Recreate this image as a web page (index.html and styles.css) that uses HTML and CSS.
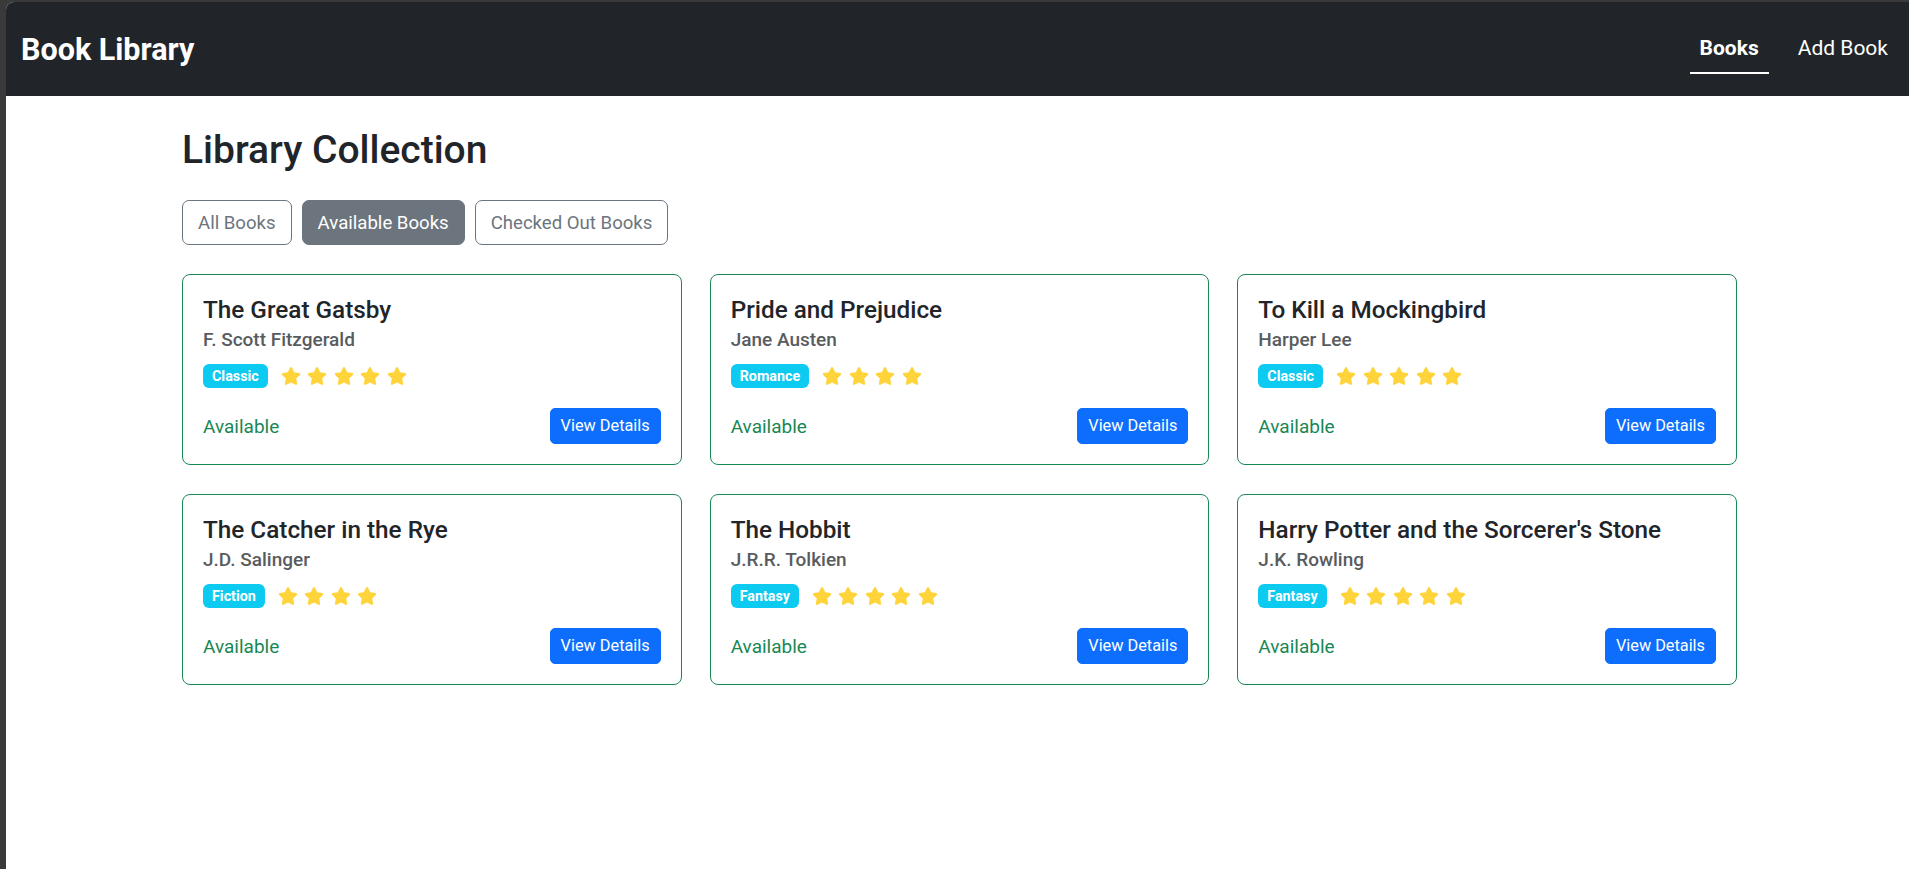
FILE: index.html
```html
<!DOCTYPE html>
<html lang="en">
<head>
<meta charset="utf-8">
<title>Book Library</title>
<link rel="stylesheet" href="styles.css">
</head>
<body>
<svg width="0" height="0" class="defs" aria-hidden="true">
  <defs>
    <symbol id="star" viewBox="0 0 576 512">
      <path d="M316.9 18C311.6 7 300.4 0 288.1 0s-23.4 7-28.8 18L195 150.3 51.4 171.5c-12 1.8-22 10.2-25.7 21.7s-.7 24.2 7.9 32.7L137.8 329 113.2 474.7c-2 12 3 24.2 12.9 31.3s23 8 33.8 2.3l128.3-68.5 128.3 68.5c10.8 5.7 23.9 4.9 33.8-2.3s14.9-19.3 12.9-31.3L438.5 329 542.7 225.9c8.6-8.5 11.7-21.2 7.9-32.7s-13.7-19.9-25.7-21.7L381.2 150.3 316.9 18z"/>
    </symbol>
  </defs>
</svg>
<div class="window">
  <nav class="navbar">
    <a class="brand" href="#">Book Library</a>
    <div class="nav-links">
      <a class="nav-link active" href="#">Books</a>
      <a class="nav-link" href="#">Add Book</a>
    </div>
  </nav>
  <main class="container">
    <h2 class="page-title">Library Collection</h2>
    <div class="filters">
      <button class="filter-btn">All Books</button>
      <button class="filter-btn active">Available Books</button>
      <button class="filter-btn">Checked Out Books</button>
    </div>
    <div class="grid">
      <div class="card">
        <h5 class="card-title">The Great Gatsby</h5>
        <h6 class="card-author">F. Scott Fitzgerald</h6>
        <div class="meta">
          <span class="badge">Classic</span>
          <span class="stars"><svg class="star"><use href="#star"/></svg><svg class="star"><use href="#star"/></svg><svg class="star"><use href="#star"/></svg><svg class="star"><use href="#star"/></svg><svg class="star"><use href="#star"/></svg></span>
        </div>
        <div class="card-footer">
          <span class="status">Available</span>
          <button class="details-btn">View Details</button>
        </div>
      </div>
      <div class="card">
        <h5 class="card-title">Pride and Prejudice</h5>
        <h6 class="card-author">Jane Austen</h6>
        <div class="meta">
          <span class="badge">Romance</span>
          <span class="stars"><svg class="star"><use href="#star"/></svg><svg class="star"><use href="#star"/></svg><svg class="star"><use href="#star"/></svg><svg class="star"><use href="#star"/></svg></span>
        </div>
        <div class="card-footer">
          <span class="status">Available</span>
          <button class="details-btn">View Details</button>
        </div>
      </div>
      <div class="card">
        <h5 class="card-title">To Kill a Mockingbird</h5>
        <h6 class="card-author">Harper Lee</h6>
        <div class="meta">
          <span class="badge">Classic</span>
          <span class="stars"><svg class="star"><use href="#star"/></svg><svg class="star"><use href="#star"/></svg><svg class="star"><use href="#star"/></svg><svg class="star"><use href="#star"/></svg><svg class="star"><use href="#star"/></svg></span>
        </div>
        <div class="card-footer">
          <span class="status">Available</span>
          <button class="details-btn">View Details</button>
        </div>
      </div>
      <div class="card">
        <h5 class="card-title">The Catcher in the Rye</h5>
        <h6 class="card-author">J.D. Salinger</h6>
        <div class="meta">
          <span class="badge">Fiction</span>
          <span class="stars"><svg class="star"><use href="#star"/></svg><svg class="star"><use href="#star"/></svg><svg class="star"><use href="#star"/></svg><svg class="star"><use href="#star"/></svg></span>
        </div>
        <div class="card-footer">
          <span class="status">Available</span>
          <button class="details-btn">View Details</button>
        </div>
      </div>
      <div class="card">
        <h5 class="card-title">The Hobbit</h5>
        <h6 class="card-author">J.R.R. Tolkien</h6>
        <div class="meta">
          <span class="badge">Fantasy</span>
          <span class="stars"><svg class="star"><use href="#star"/></svg><svg class="star"><use href="#star"/></svg><svg class="star"><use href="#star"/></svg><svg class="star"><use href="#star"/></svg><svg class="star"><use href="#star"/></svg></span>
        </div>
        <div class="card-footer">
          <span class="status">Available</span>
          <button class="details-btn">View Details</button>
        </div>
      </div>
      <div class="card">
        <h5 class="card-title">Harry Potter and the Sorcerer's Stone</h5>
        <h6 class="card-author">J.K. Rowling</h6>
        <div class="meta">
          <span class="badge">Fantasy</span>
          <span class="stars"><svg class="star"><use href="#star"/></svg><svg class="star"><use href="#star"/></svg><svg class="star"><use href="#star"/></svg><svg class="star"><use href="#star"/></svg><svg class="star"><use href="#star"/></svg></span>
        </div>
        <div class="card-footer">
          <span class="status">Available</span>
          <button class="details-btn">View Details</button>
        </div>
      </div>
    </div>
  </main>
</div>
</body>
</html>
```

FILE: styles.css
```css
* { box-sizing: border-box; }

html, body {
  margin: 0;
  padding: 0;
  height: 100%;
  overflow: hidden;
}

body {
  background: #3a3a3a;
  font-family: "Segoe UI", Roboto, "Noto Sans", sans-serif;
  color: #212529;
  padding-top: 2px;
  padding-left: 6px;
}

.defs { position: absolute; width: 0; height: 0; }

.window {
  width: 1907px;
  height: 100%;
  background: #ffffff;
  border-top-left-radius: 8px;
  overflow: hidden;
}

.navbar {
  height: 94px;
  background: #212529;
  display: flex;
  align-items: center;
  justify-content: space-between;
  padding: 0 15px;
}

.brand {
  color: #ffffff;
  text-decoration: none;
  font-size: 30.5px;
  font-weight: 700;
  line-height: 45px;
}

.nav-links {
  display: flex;
  align-items: center;
  gap: 19px;
}

.nav-link {
  display: block;
  color: #ffffff;
  text-decoration: none;
  font-size: 21px;
  line-height: 30px;
  padding: 8px 10px 9px;
  border-bottom: 2px solid transparent;
}

.nav-link.active {
  font-weight: 700;
  border-bottom-color: #ffffff;
}

.container {
  width: 1555px;
  margin: 0 auto;
  padding-top: 30px;
}

.page-title {
  margin: 0 0 26px;
  font-size: 39px;
  font-weight: 500;
  line-height: 48px;
  color: #212529;
}

.filters {
  display: flex;
  gap: 10px;
  margin-bottom: 29px;
}

.filter-btn {
  font-family: inherit;
  font-size: 18.6px;
  line-height: 28px;
  padding: 7.5px 15px;
  border: 1px solid #6c757d;
  border-radius: 7px;
  background: #ffffff;
  color: #6c757d;
}

.filter-btn.active {
  background: #6c757d;
  color: #ffffff;
}

.grid {
  display: grid;
  grid-template-columns: repeat(3, 1fr);
  column-gap: 28px;
  row-gap: 29px;
}

.card {
  border: 1px solid #198754;
  border-radius: 8px;
  padding: 20px;
  background: #ffffff;
}

.card-title {
  margin: 0 0 3px;
  font-size: 24.3px;
  font-weight: 500;
  line-height: 30px;
  color: #212529;
}

.card-author {
  margin: 0 0 12px;
  font-size: 19px;
  font-weight: 500;
  line-height: 24px;
  color: #595c5f;
}

.meta {
  display: flex;
  align-items: center;
  height: 24px;
}

.badge {
  display: inline-block;
  background: #0dcaf0;
  color: #ffffff;
  font-size: 14.3px;
  font-weight: 700;
  line-height: 14px;
  padding: 5px 9px;
  border-radius: 6px;
}

.stars {
  display: flex;
  align-items: center;
  gap: 6.5px;
  margin-left: 13px;
}

.star {
  width: 20px;
  height: 18px;
  fill: #ffd43b;
}

.card-footer {
  display: flex;
  align-items: center;
  justify-content: space-between;
  margin-top: 20px;
}

.status {
  color: #198754;
  font-size: 19px;
  line-height: 30px;
  padding-top: 2px;
}

.details-btn {
  font-family: inherit;
  font-size: 16.3px;
  line-height: 24px;
  padding: 5px 10px;
  border: 1px solid #0d6efd;
  border-radius: 5px;
  background: #0d6efd;
  color: #ffffff;
}
```
